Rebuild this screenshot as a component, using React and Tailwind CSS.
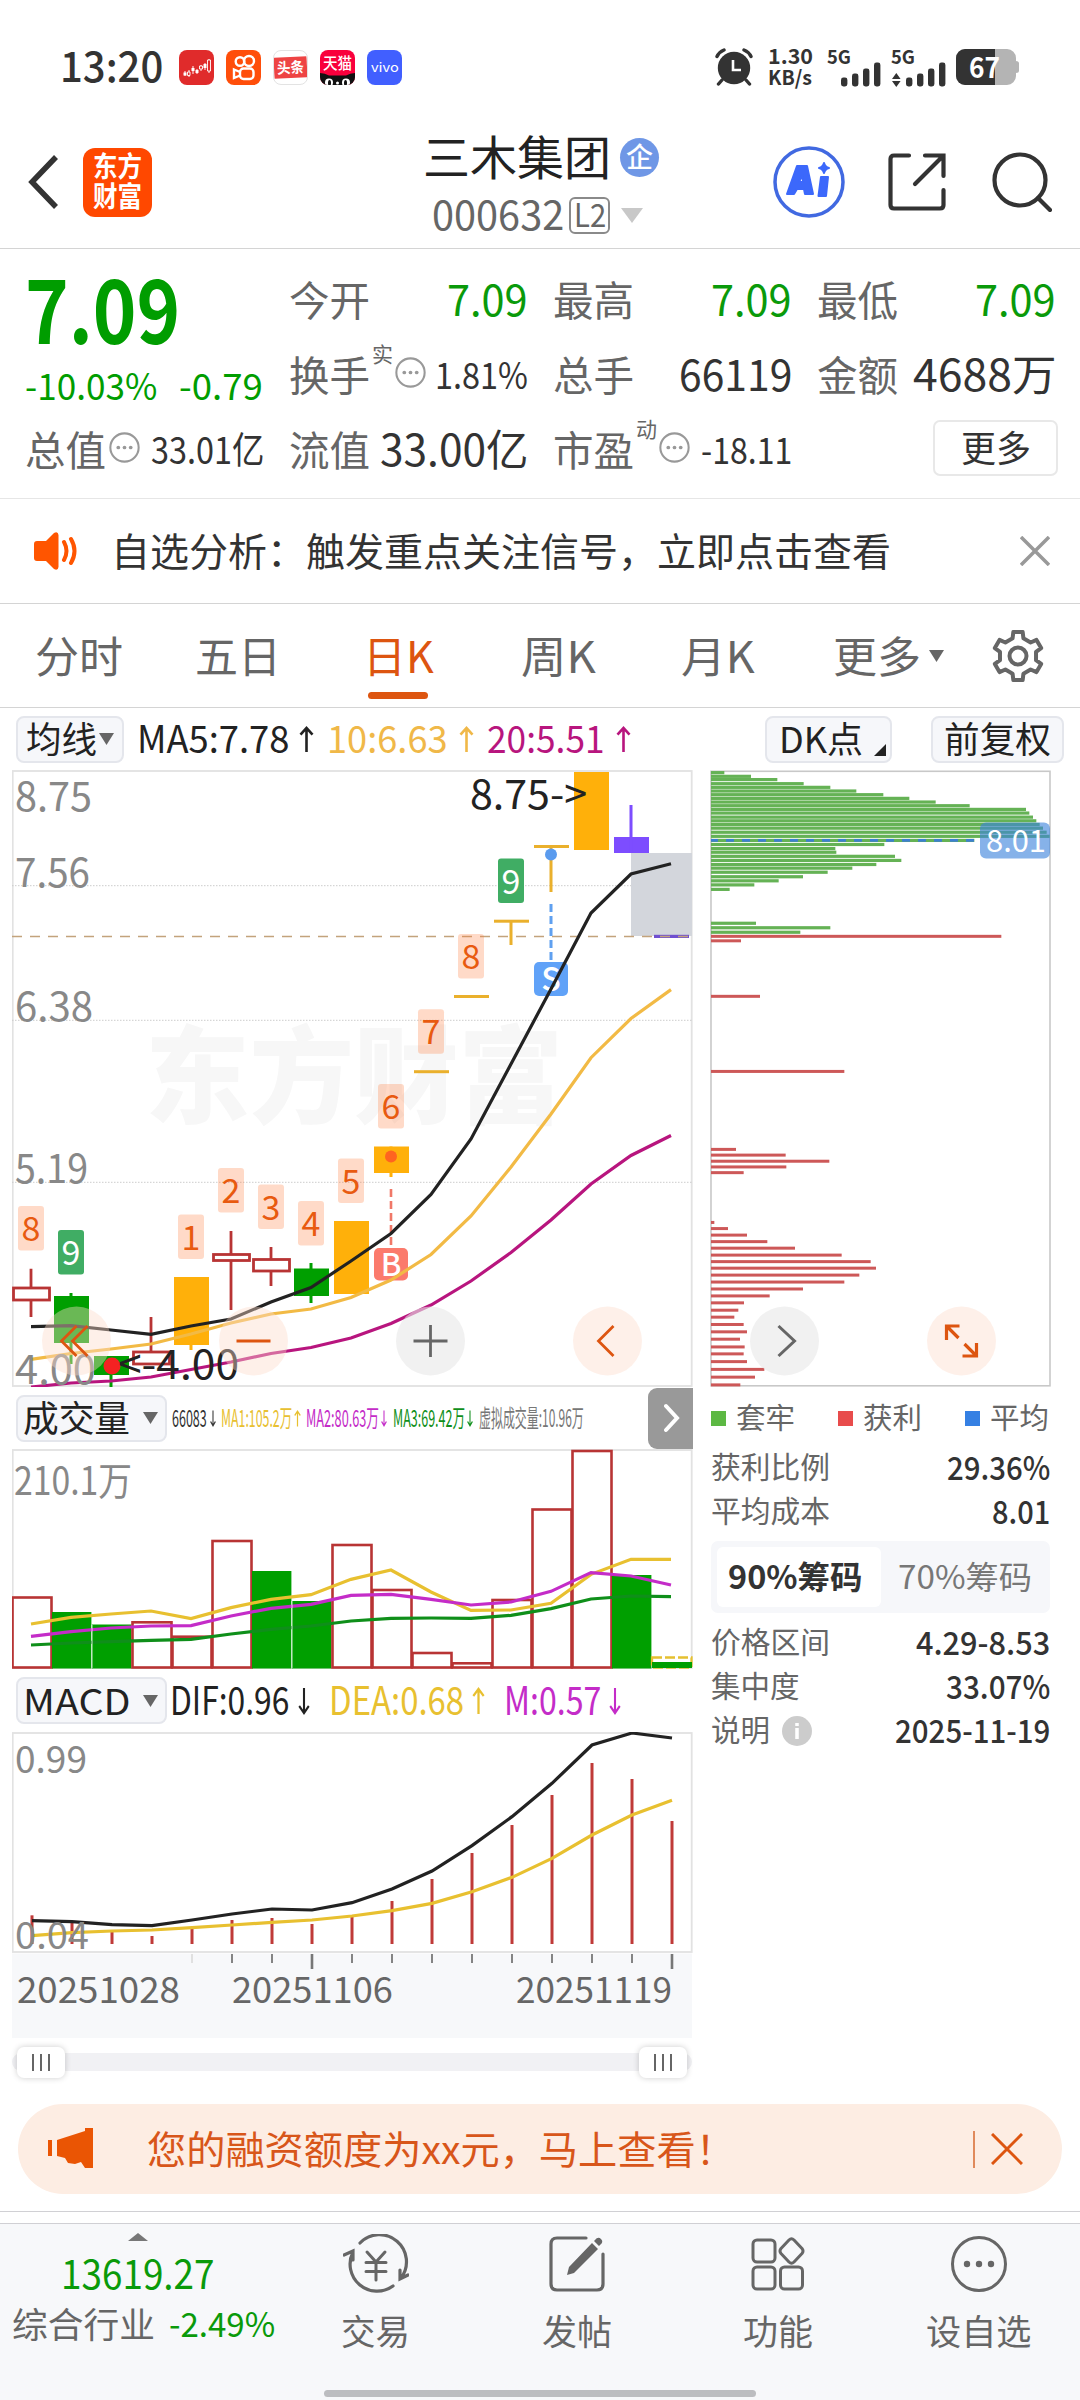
import React, { useLayoutEffect, useRef } from 'react';
import clsx from 'clsx';

const FONT = '"Noto Sans CJK SC", "Noto Sans", sans-serif';

// Text that is squeezed or stretched to a fixed column width
const Fit = ({ w, className, children }) => {
  const ref = useRef(null);

  useLayoutEffect(() => {
    const el = ref.current;
    el.style.transform = `scaleX(${w / el.offsetWidth})`;
  }, [w, children]);

  return (
    <span className={clsx('block shrink-0 leading-none', className)} style={{ width: w }}>
      <span ref={ref} className="inline-block whitespace-nowrap origin-left -translate-y-[0.06em]">
        {children}
      </span>
    </span>
  );
};

const Arrow = ({ down, className = 'w-[15px] h-[28px]' }) => (
  <svg viewBox="0 0 15 28" preserveAspectRatio="none" className={clsx('shrink-0', down && 'rotate-180', className)} fill="none" stroke="currentColor" strokeWidth="2.6">
    <path d="M7.5 27V2M1.5 9l6-7 6 7" />
  </svg>
);

const Caret = ({ className }) => (
  <svg viewBox="0 0 10 10" preserveAspectRatio="none" className={clsx('shrink-0', className)}>
    <path d="M0 0h10L5 10z" fill="currentColor" />
  </svg>
);

const Dots = ({ className }) => (
  <svg viewBox="0 0 30 30" className={clsx('w-[31px] h-[31px] shrink-0 text-[#999]', className)}>
    <circle cx="15" cy="15" r="13.7" fill="none" stroke="currentColor" strokeWidth="2" />
    {[9, 15, 21].map((x) => <circle key={x} cx={x} cy="15" r="1.8" fill="currentColor" />)}
  </svg>
);

// --- Status bar & header ---

const Signal = ({ data }) => (
  <svg viewBox="0 0 56 40" className="w-[56px] h-[40px] overflow-visible">
    <text x={data ? 0 : 1} y="17" fontSize="19" fontWeight="700" fill="#333" textLength="24" lengthAdjust="spacingAndGlyphs">5G</text>
    {[9, 13, 18, 24].map((h, i) => (
      <rect key={h} x={15 + i * 11} y={39.5 - h} width="6.4" height={h} rx="2.4" fill="#333" />
    ))}
    {data && <path d="M1 32l4.300-6 4.300 6zM1 34l4.300 6 4.300-6z" fill="#333" />}
  </svg>
);

const StatusBar = () => (
  <div className="h-[116px] pt-[18px] pl-[60px] flex items-center">
    <Fit w={103} className="text-[42px] font-medium text-[#333]">13:20</Fit>
    <div className="flex gap-[12px] ml-[16px]">
      <svg viewBox="0 0 35 35" className="w-[35px] h-[35px]">
        <rect width="35" height="35" rx="8" fill="#e02b2b" />
        <path d="M6 21v5M10 20v7M14 16v8M18 19v5M22 15v6M26 13v7M30 9v14" stroke="#fff" strokeWidth="1.200" opacity=".8" />
        <path d="M4.500 22.500h3v3h-3zM12.500 18h3v3h-3zM16.500 20h3v3h-3zM24.500 14h3v4h-3z" fill="#fff" />
        <path d="M8.500 22h2.500v3.500H8.500zM20.500 16h3v3h-3zM28.500 10h3v11h-3z" fill="#e02b2b" stroke="#fff" strokeWidth=".9" />
      </svg>
      <svg viewBox="0 0 35 35" className="w-[35px] h-[35px]">
        <rect width="35" height="35" rx="8" fill="#ff4e0a" />
        <g fill="none" stroke="#fff" strokeWidth="2.400">
          <circle cx="14" cy="11.500" r="4.300" />
          <circle cx="23" cy="11" r="5" />
          <rect x="14" y="18.500" width="13.500" height="10.500" rx="3.500" />
          <path d="M14 22l-6-2.500v8.500l6-2.500" />
        </g>
      </svg>
      <div className="w-[35px] h-[35px] rounded-[8px] border border-[#e3e3e3] bg-white flex items-center overflow-hidden">
        <div className="w-[35px] h-[21px] bg-[#ee4444] -rotate-3 flex items-center justify-center">
          <Fit w={27} className="text-[15px] font-bold text-white">头条</Fit>
        </div>
      </div>
      <div className="w-[35px] h-[35px] rounded-[8px] bg-[#f9003c] overflow-hidden flex flex-col justify-between items-center">
        <Fit w={29} className="text-[15.500px] font-medium text-white mt-[6px]">天猫</Fit>
        <svg viewBox="0 0 35 12" className="w-[35px] h-[12px]">
          <path d="M0 12V0q5 0 9 2.500h17Q30 0 35 0v12z" fill="#111" />
          <circle cx="9" cy="9.500" r="4" fill="#fff" />
          <circle cx="26" cy="9.500" r="4" fill="#fff" />
          <ellipse cx="9.500" cy="10" rx="1.500" ry="3" fill="#111" />
          <ellipse cx="25.500" cy="10" rx="1.500" ry="3" fill="#111" />
          <circle cx="17.500" cy="10" r="1.500" fill="#fff" />
        </svg>
      </div>
      <div className="w-[35px] h-[35px] rounded-[8px] bg-[#415fff] flex items-center justify-center">
        <Fit w={28} className="text-[13px] text-white">vivo</Fit>
      </div>
    </div>
    <svg viewBox="0 0 38 38" className="w-[38px] h-[38px] ml-[313px]">
      <circle cx="19" cy="20" r="16.200" fill="#333" />
      <path d="M2 8.500Q4 4 9 2M36 8.500Q34 4 29 2M7 32l-3.500 4M31 32l3.500 4" stroke="#333" strokeWidth="3.400" strokeLinecap="round" fill="none" />
      <path d="M18 12v10h8" stroke="#fff" strokeWidth="2.600" fill="none" />
    </svg>
    <div className="ml-[15px] flex flex-col gap-[1px]">
      <Fit w={45} className="text-[21px] font-bold text-[#333]">1.30</Fit>
      <Fit w={44} className="text-[20px] font-bold text-[#333]">KB/s</Fit>
    </div>
    <div className="ml-[13px] flex gap-[9px]">
      <Signal />
      <Signal data />
    </div>
    <svg viewBox="0 0 63 36" className="w-[63px] h-[36px] ml-[9px] overflow-visible">
      <path d="M9 0h42a9 9 0 0 1 9 9v3q3 0 3 2.500v7q0 2.500-3 2.500v3a9 9 0 0 1-9 9H9a9 9 0 0 1-9-9V9a9 9 0 0 1 9-9z" fill="#b4b4b4" />
      <path d="M9 0h30v36H9a9 9 0 0 1-9-9V9a9 9 0 0 1 9-9z" fill="#333" />
      <text x="13" y="28.500" fontSize="29" fontWeight="700" fill="#fff" textLength="31" lengthAdjust="spacingAndGlyphs">67</text>
    </svg>
  </div>
);

const Header = () => (
  <div className="h-[133px] pl-[28px] flex items-center border-b border-[#d4d4d4]">
    <svg viewBox="0 0 30 54" className="w-[30px] h-[54px]" fill="none" stroke="#333" strokeWidth="5.500">
      <path d="M28 2L4 27l24 25" />
    </svg>
    <div className="w-[69px] h-[69px] ml-[25px] rounded-[12px] bg-[#ff4800] text-white flex flex-col items-center justify-center gap-[2px]">
      <Fit w={49} className="text-[28px] font-bold">东方</Fit>
      <Fit w={49} className="text-[28px] font-bold">财富</Fit>
    </div>
    <div className="ml-[271px] w-[237px] pt-[5px]">
      <div className="flex items-center gap-[9px]">
        <Fit w={188} className="text-[47px] text-[#222]">三木集团</Fit>
        <div className="w-[39px] h-[39px] rounded-full bg-[#6f97e6] flex items-center justify-center">
          <Fit w={27} className="text-[27px] font-medium text-white">企</Fit>
        </div>
      </div>
      <div className="flex items-center mt-[14px] pl-[9px]">
        <Fit w={132} className="text-[40px] text-[#666]">000632</Fit>
        <div className="w-[41px] h-[37px] ml-[5px] rounded-[6px] border-2 border-[#8a8a8a] flex items-center justify-center">
          <Fit w={32} className="text-[32px] text-[#666]">L2</Fit>
        </div>
        <Caret className="w-[22px] h-[15px] ml-[11px] text-[#c8c8c8]" />
      </div>
    </div>
    <svg viewBox="0 0 72 72" className="w-[72px] h-[72px] ml-[113px]">
      <circle cx="36" cy="36" r="34" fill="none" stroke="#4169e1" strokeWidth="3.500" />
      <g fill="#3c68fb" stroke="#3c68fb" strokeWidth="2" strokeLinejoin="round">
        <path fillRule="evenodd" d="M24 20h10l6 28h-8l-1-5h-7l-3 5h-7zM26 36h4l-.5-7z" />
        <path d="M48 31h7l-2 19h-7.500zM51 17q1 4 5 5-4 1-5 5-1-4-5-5 4-1 5-5z" />
      </g>
    </svg>
    <svg viewBox="0 0 58 58" className="w-[58px] h-[58px] ml-[43px]" fill="none" stroke="#333" strokeWidth="4.200" strokeLinecap="round">
      <path d="M21 2.500H6Q2.500 2.500 2.500 6v46q0 3.500 3.500 3.500h46q3.500 0 3.500-3.500V37M37 2.500h18.500V23M55 3L27 31" />
    </svg>
    <svg viewBox="0 0 60 60" className="w-[60px] h-[60px] ml-[46px]" fill="none" stroke="#333" strokeWidth="4.200" strokeLinecap="round">
      <circle cx="28" cy="28" r="25.500" />
      <path d="M46 46l12 12" />
    </svg>
  </div>
);

// --- Quote ---

const Cell = ({ label, sup, dots, value, w, green, small }) => (
  <div className="flex items-center -ml-px -mr-[2px]">
    <Fit w={81} className="text-[41px] text-[#666]">{label}</Fit>
    {sup && <Fit w={21} className="text-[21px] text-[#666] mb-[42px] ml-[2px]">{sup}</Fit>}
    {dots && <Dots className={clsx('mb-[6px]', sup ? 'ml-[2px]' : 'ml-[3px]')} />}
    <Fit w={w} className={clsx('ml-auto', green ? 'text-[#0a9a0a]' : 'text-[#333]', small ? 'text-[37px]' : 'text-[43px]')}>
      {value}
    </Fit>
  </div>
);

const Quote = () => (
  <div className="h-[250px] px-[26px] pt-[14px] border-b border-[#e6e6e6] grid grid-cols-4 grid-rows-[75px_75px_75px] gap-x-[28px]">
    <div className="row-span-2 pt-[3px] text-[#009d00]">
      <Fit w={155} className="text-[89px] font-bold -ml-px">7.09</Fit>
      <div className="flex justify-between mt-[13px] -ml-px -mr-px">
        <Fit w={132} className="text-[37px]">-10.03%</Fit>
        <Fit w={84} className="text-[37px]">-0.79</Fit>
      </div>
    </div>
    <Cell label="今开" value="7.09" w={81} green />
    <Cell label="最高" value="7.09" w={81} green />
    <Cell label="最低" value="7.09" w={81} green />
    <Cell label="换手" sup="实" dots value="1.81%" w={93} small />
    <Cell label="总手" value="66119" w={113} />
    <Cell label="金额" value="4688万" w={143} />
    <Cell label="总值" dots value="33.01亿" w={113} small />
    <Cell label="流值" value="33.00亿" w={148} />
    <Cell label="市盈" sup="动" dots value="-18.11" w={91} small />
    <div className="flex items-center justify-end -mr-[4px]">
      <div className="w-[125px] h-[56px] -mt-[5px] rounded-[7px] border-2 border-[#e8e8e8] flex items-center justify-center">
        <Fit w={70} className="text-[36px] text-[#333]">更多</Fit>
      </div>
    </div>
  </div>
);

const Notice = () => (
  <div className="h-[105px] pl-[34px] pr-[30px] flex items-center border-b border-[#d4d4d4]">
    <svg viewBox="0 0 44 38" className="w-[44px] h-[38px]">
      <path d="M3 9h9L20 1q4-2 4.500 2v32q-.5 4-4.500 2l-8-8H3q-3 0-3-3V12q0-3 3-3z" fill="#ff5500" />
      <path d="M30 10q5 9 0 18M37 7q7 12 0 24" fill="none" stroke="#ff5500" strokeWidth="4" strokeLinecap="round" />
    </svg>
    <Fit w={780} className="ml-[33px] text-[39px] text-[#333]">自选分析：触发重点关注信号，立即点击查看</Fit>
    <svg viewBox="0 0 30 30" className="w-[30px] h-[30px] ml-auto" stroke="#999" strokeWidth="3.500">
      <path d="M1 1l28 28M29 1L1 29" />
    </svg>
  </div>
);

// --- Period tabs ---

const gearPoints = Array.from({ length: 6 }, (_, k) => {
  const base = -90 + k * 60;
  return [[-17, 18.5], [-11, 24.5], [11, 24.5], [17, 18.5]].map(([da, r]) => {
    const a = ((base + da) * Math.PI) / 180;
    return `${26 + r * Math.cos(a)},${26 + r * Math.sin(a)}`;
  }).join(' ');
}).join(' ');

const Tabs = () => (
  <div className="h-[104px] pt-[3px] pl-[35px] flex items-center border-b border-[#d4d4d4] text-[43px] text-[#666]">
    <Fit w={88}>分时</Fit>
    <Fit w={86} className="ml-[72px]">五日</Fit>
    <div className="ml-[82px] relative text-[#dd5510]">
      <Fit w={71}>日K</Fit>
      <div className="absolute left-[5px] top-[56px] w-[60px] h-[7px] rounded-full bg-[#dd5510]" />
    </div>
    <Fit w={75} className="ml-[87px]">周K</Fit>
    <Fit w={74} className="ml-[85px]">月K</Fit>
    <Fit w={88} className="ml-[78px]">更多</Fit>
    <Caret className="w-[15px] h-[12px] ml-[8px] -mt-[3px]" />
    <svg viewBox="0 0 52 52" className="w-[52px] h-[52px] ml-[48px] -mt-[3px]" fill="none" stroke="#666" strokeWidth="4">
      <polygon points={gearPoints} strokeLinejoin="round" />
      <circle cx="26" cy="26" r="8.500" />
    </svg>
  </div>
);

const Chip = ({ className, children }) => (
  <div className={clsx('h-[47px] shrink-0 rounded-[8px] border-2 border-[#e4e6ec] bg-[#f6f7fa] text-[36px] text-[#222] flex items-center', className)}>
    {children}
  </div>
);

const MaBar = () => (
  <div className="h-[62px] pl-[16px] pr-[16px] flex items-center text-[38px]">
    <Chip className="w-[108px] pl-[8px]">
      <Fit w={71}>均线</Fit>
      <Caret className="w-[15px] h-[12px] ml-[2px] text-[#666]" />
    </Chip>
    <div className="flex items-center ml-[13px] text-[#222]">
      <Fit w={152}>MA5:7.78</Fit>
      <Arrow className="w-[15px] h-[27px] ml-[10px]" />
    </div>
    <div className="flex items-center ml-[13px] text-[#f0b848]">
      <Fit w={121}>10:6.63</Fit>
      <Arrow className="w-[15px] h-[27px] ml-[11px]" />
    </div>
    <div className="flex items-center ml-[13px] text-[#b8157e]">
      <Fit w={118}>20:5.51</Fit>
      <Arrow className="w-[15px] h-[27px] ml-[11px]" />
    </div>
    <Chip className="w-[127px] ml-auto pl-[12px]">
      <Fit w={84}>DK点</Fit>
      <svg viewBox="0 0 12 12" className="w-[12px] h-[12px] ml-[11px] mt-[22px]"><path d="M12 0v12H0z" fill="#222" /></svg>
    </Chip>
    <Chip className="w-[133px] ml-[39px] justify-center">
      <Fit w={107}>前复权</Fit>
    </Chip>
  </div>
);

// --- Price chart ---

const X = (i) => 31 + 40 * i;
const line = (ys, dx = 0) => ys.map((y, i) => `${X(i) + dx},${y}`).join(' ');

const ma5 = [1326.7, 1325.7, 1330, 1334.3, 1326, 1319, 1302, 1287.5, 1261, 1233.5, 1194.5, 1139, 1064, 989, 913, 874, 863.7];
const ma10 = [1359.3, 1353.5, 1349, 1344, 1334, 1323, 1314, 1309, 1297.5, 1280, 1254.5, 1216, 1167, 1114, 1057.7, 1018.5, 989.6];
const ma20 = [1387, 1383, 1381, 1377, 1369.5, 1362, 1353.5, 1347.5, 1338, 1323.5, 1305, 1281, 1252.5, 1220, 1184, 1155.5, 1135.5];

// kind, index, open/close band, wick band
const candles = [
  ['up', 0, 1288, 1300, 1268.7, 1317],
  ['down', 1, 1296, 1343, 1293, 1364],
  ['down', 2, 1356, 1375, 1356, 1387],
  ['up', 3, 1352, 1364, 1317, 1364],
  ['limit', 4, 1277, 1345, 1277, 1350],
  ['up', 5, 1254.5, 1260.5, 1231, 1310],
  ['up', 6, 1259.5, 1271, 1247, 1286],
  ['down', 7, 1268.5, 1296, 1263, 1303],
  ['limit', 8, 1221, 1294, 1221, 1294],
  ['limit', 9, 1146.5, 1173, 1146.5, 1177],
  ['flat', 10, 1070.2, 1073.2, 1071, 1072],
  ['flat', 11, 995, 998, 996, 997],
  ['flat', 12, 919.7, 922.7, 921, 945],
  ['flat', 13, 845, 848, 846, 892],
  ['limit', 14, 772, 850, 772, 850],
  ['mark', 15, 837, 853, 805, 853],
];

const candleColor = { up: '#b83434', down: '#009f00', limit: '#ffb00a', flat: '#eab02c', mark: '#7d4dff' };

const Candle = ({ kind, i, top, bottom, high, low }) => {
  const color = candleColor[kind];
  if (kind === 'up') {
    return (
      <g fill="none" stroke={color} strokeWidth="2.800">
        <rect x={X(i) - 17.5} y={top} width="36" height={bottom - top} />
        <path d={`M${X(i)} ${high}V${top}M${X(i)} ${bottom}V${low}`} />
      </g>
    );
  }
  return (
    <g fill={color}>
      <rect x={X(i) - 17} y={top} width="35" height={bottom - top} />
      <rect x={X(i) - 1.5} y={high} width="3" height={low - high} />
    </g>
  );
};

const counts = [
  [0, 8, 1206], [1, 9, 1230], [4, 1, 1214.5], [5, 2, 1168], [6, 3, 1184.5], [7, 4, 1201], [8, 5, 1158.5],
  [9, 6, 1084], [10, 7, 1009.3], [11, 8, 934], [12, 9, 858.5],
];

const RoundButton = ({ cx, gray, d, width = 2.8 }) => (
  <g>
    <circle cx={cx} cy="1341" r="34.500" fill={gray ? '#e8e8e8' : '#fddccb'} opacity={gray ? 0.6 : 0.42} />
    <path d={d} transform={`translate(${cx} 1341)`} fill="none" stroke={gray ? '#666' : '#dd5510'} strokeWidth={width} />
  </g>
);

const PriceChart = () => (
  <svg viewBox="12 770 681 617" className="block w-[681px] h-[617px]">
    <text x="145" y="1115" fontSize="106" fontWeight="900" fill="#f7f7f7" textLength="418" lengthAdjust="spacingAndGlyphs">东方财富</text>
    <rect x="12.700" y="771" width="679" height="615" fill="none" stroke="#e2e2e2" strokeWidth="1.800" />
    {[885.7, 1020.3, 1182.3].map((y) => (
      <path key={y} d={`M12 ${y}H692`} stroke="#ccc" strokeWidth="1" strokeDasharray="1.500 1.500" />
    ))}
    <rect x="631" y="853" width="61" height="83" fill="#d3d6dc" />
    <g fontSize="41" fill="#888">
      <text x="15" y="811" textLength="77" lengthAdjust="spacingAndGlyphs">8.75</text>
      <text x="15" y="887" textLength="75" lengthAdjust="spacingAndGlyphs">7.56</text>
      <text x="15" y="1021" textLength="78" lengthAdjust="spacingAndGlyphs">6.38</text>
      <text x="15" y="1183" textLength="73" lengthAdjust="spacingAndGlyphs">5.19</text>
    </g>
    {candles.map(([kind, i, top, bottom, high, low]) => (
      <Candle key={i} kind={kind} i={i} top={top} bottom={bottom} high={high} low={low} />
    ))}
    <rect x="654" y="934.800" width="35" height="3.200" fill="#7050d0" />
    <path d="M12 936.500H692" stroke="#c3a37c" strokeWidth="1.300" strokeDasharray="10 8" />
    {counts.map(([i, n, y]) => (
      <g key={i}>
        <rect x={X(i) - 13} y={y} width="26" height="44.500" rx="3" fill={n === 9 ? '#40ad64' : '#ff7733'} opacity={n === 9 ? 1 : 0.27} />
        <text x={X(i)} y={y + 35} fontSize="34" textAnchor="middle" fill={n === 9 ? '#fff' : '#e85a10'}>{n}</text>
      </g>
    ))}
    <g>
      <circle cx="391" cy="1156.500" r="6" fill="#ff6420" />
      <path d="M391 1189v56" stroke="#f07868" strokeWidth="2.600" strokeDasharray="8 4" />
      <rect x="374" y="1248" width="34" height="32.500" rx="5" fill="#fb7a6c" />
      <text x="391" y="1276" fontSize="31" fontWeight="500" textAnchor="middle" fill="#fff">B</text>
      <circle cx="551" cy="854.500" r="6" fill="#5a9bee" />
      <path d="M551 904v58" stroke="#5fa0f0" strokeWidth="3" strokeDasharray="8 4" />
      <rect x="534" y="962" width="34" height="34" rx="5" fill="#60a2f8" />
      <text x="551" y="991" fontSize="32" fontWeight="500" textAnchor="middle" fill="#fff">S</text>
    </g>
    <g fill="none" strokeWidth="3.200">
      <polyline points={line(ma20)} stroke="#b8157e" />
      <polyline points={line(ma10)} stroke="#f2ba45" />
      <polyline points={line(ma5)} stroke="#222" />
    </g>
    <circle cx="112" cy="1366" r="8.500" fill="#f52222" />
    <text x="15" y="1384" fontSize="41" fill="#888" textLength="81" lengthAdjust="spacingAndGlyphs">4.00</text>
    <g fontSize="41" fill="#222">
      <text x="470" y="809" textLength="117" lengthAdjust="spacingAndGlyphs">8.75-&gt;</text>
      <text x="118" y="1379" textLength="121" lengthAdjust="spacingAndGlyphs">&lt;-4.00</text>
    </g>
    <RoundButton cx={76.5} d="M0-15L-15 0 0 15M11-15L-4 0 11 15" />
    <RoundButton cx={253.5} d="M-17 0H17" />
    <RoundButton cx={430.5} gray d="M-17 0H17M0-16V16" />
    <RoundButton cx={607.5} d="M6-15L-9 0 6 15" />
  </svg>
);

// --- Volume chart ---

const volumes = [
  [1597.5, 1], [1612, 0], [1624.5, 0], [1622.3, 1], [1636.7, 1], [1541, 1], [1571, 0], [1601, 0], [1545, 1],
  [1590, 1], [1653, 1], [1663.3, 1], [1600, 1], [1509.5, 1], [1451, 1], [1575, 0],
];
const vol1 = [732, 712, 702, 693, 716, 683, 658, 644, 598, 570, 636, 691, 690, 670, 583, 538, 538];
const vol2 = [769, 755, 744, 738, 737, 708, 685, 673, 646, 643, 658, 675, 666, 634, 578, 588, 615];
const vol3 = [795, 789, 785, 781, 778, 762, 748, 738, 723, 715, 714, 715, 706, 686, 657, 648, 650];
const volLine = (ys) => line(ys.map((y) => 1380 + y / 3));

const VolumeChart = () => (
  <svg viewBox="12 1449 681 220" className="block w-[681px] h-[220px]">
    <rect x="12.700" y="1450" width="679" height="218" fill="none" stroke="#e2e2e2" strokeWidth="1.800" />
    <text x="14" y="1495" fontSize="39" fill="#888" textLength="118" lengthAdjust="spacingAndGlyphs">210.1万</text>
    {volumes.map(([y, up], i) => up
      ? <rect key={i} x={12.5 + 40 * i} y={y} width="39" height={1667.5 - y} fill="none" stroke="#b83434" strokeWidth="2.600" />
      : <rect key={i} x={12 + 40 * i} y={y} width="39.400" height={1668.5 - y} fill="#009f00" />)}
    <rect x="652" y="1657.500" width="39.500" height="10" fill="none" stroke="#e5c030" strokeWidth="2.300" strokeDasharray="10 3" />
    <rect x="652" y="1662" width="40" height="6" fill="#009f00" />
    <g fill="none" strokeWidth="3.200">
      <polyline points={volLine(vol3)} stroke="#0f8f1a" />
      <polyline points={volLine(vol1)} stroke="#e8c030" />
      <polyline points={volLine(vol2)} stroke="#c42cc8" />
    </g>
    <path d="M92 1625v43M292 1601v67" stroke="#fff" strokeWidth=".8" />
  </svg>
);

const VolumeBar = () => (
  <div className="h-[62px] pl-[4px] flex items-center text-[24px]">
    <Chip className="w-[151px] pl-[5px]">
      <Fit w={107}>成交量</Fit>
      <Caret className="w-[15px] h-[12px] ml-[13px] text-[#666]" />
    </Chip>
    <div className="flex items-center ml-[5px] text-[#333]">
      <Fit w={35}>66083</Fit>
      <Arrow down className="w-[6px] h-[17px] ml-[3px]" />
    </div>
    <div className="flex items-center ml-[5px] text-[#e8c030]">
      <Fit w={71}>MA1:105.2万</Fit>
      <Arrow className="w-[7px] h-[17px] ml-[2px]" />
    </div>
    <div className="flex items-center ml-[5px] text-[#c42cc8]">
      <Fit w={73}>MA2:80.63万</Fit>
      <Arrow down className="w-[6px] h-[17px] ml-[2px]" />
    </div>
    <div className="flex items-center ml-[6px] text-[#0f8f1a]">
      <Fit w={72}>MA3:69.42万</Fit>
      <Arrow down className="w-[6px] h-[17px] ml-[2px]" />
    </div>
    <Fit w={105} className="ml-[6px] text-[#777]">虚拟成交量:10.96万</Fit>
    <div className="w-[45px] h-[61px] ml-auto rounded-l-[9px] bg-[#999] flex items-center justify-center">
      <svg viewBox="0 0 16 30" className="w-[16px] h-[30px] ml-[3px]" fill="none" stroke="#fff" strokeWidth="4" strokeLinecap="round">
        <path d="M2 3l11 12L2 27" />
      </svg>
    </div>
  </div>
);

// --- MACD ---

const macdBars = [736, 753, 786, 798, 774, 750, 744, 762, 741, 693, 627, 549, 465, 375, 279, 327, 453];
const dif = [752, 755, 764, 767, 750, 732, 717, 720, 698, 657, 603, 527, 440, 340, 225, 189, 204];
const dea = [797, 788, 783, 780, 773, 765, 757, 750, 738, 722, 700, 665, 622, 565, 495, 435, 391];
const macdLine = (ys) => line(ys.map((y) => 1670 + y / 3), 1);

const MacdBar = () => (
  <div className="h-[63px] pl-[4px] flex items-center text-[39px]">
    <Chip className="w-[151px] pl-[5px]">
      <Fit w={107}>MACD</Fit>
      <Caret className="w-[15px] h-[12px] ml-[13px] text-[#666]" />
    </Chip>
    <Fit w={119} className="ml-[3px] text-[#222]">DIF:0.96</Fit>
    <Arrow down className="w-[12px] h-[28px] ml-[9px] text-[#222]" />
    <Fit w={135} className="ml-[19px] text-[#e8c030]">DEA:0.68</Fit>
    <Arrow className="w-[13px] h-[28px] ml-[8px] text-[#e8c030]" />
    <Fit w={97} className="ml-[19px] text-[#c42cc8]">M:0.57</Fit>
    <Arrow down className="w-[12px] h-[28px] ml-[8px] text-[#c42cc8]" />
  </div>
);

const MacdChart = () => (
  <svg viewBox="12 1732 681 306" className="block w-[681px] h-[306px]">
    <rect x="12" y="1953.500" width="680" height="84.500" fill="#f7f8fa" />
    <rect x="12.700" y="1733" width="679" height="219" fill="none" stroke="#e2e2e2" strokeWidth="1.800" />
    {macdBars.map((y, i) => (
      <rect key={i} x={X(i) - 0.5} y={1670 + y / 3} width="3" height={274 - y / 3} fill="#c03a38" />
    ))}
    <g fill="none" strokeWidth="3.200">
      <polyline points={macdLine(dif)} stroke="#222" />
      <polyline points={macdLine(dea)} stroke="#e8c030" />
    </g>
    <g fontSize="38" fill="#888">
      <text x="15" y="1773" textLength="72" lengthAdjust="spacingAndGlyphs">0.99</text>
      <text x="15" y="1949" textLength="74" lengthAdjust="spacingAndGlyphs">0.04</text>
    </g>
    {macdBars.map((_, i) => i > 3 && (
      <path key={i} d={`M${X(i) + 1} 1954v${i === 7 || i === 16 ? 15 : 9}`} stroke={i === 4 ? '#ddd' : '#777'} strokeWidth={i === 7 || i === 16 ? 2.6 : 1.8} />
    ))}
    <g fontSize="36" fill="#666">
      <text x="17" y="2003" textLength="163" lengthAdjust="spacingAndGlyphs">20251028</text>
      <text x="232" y="2003" textLength="161" lengthAdjust="spacingAndGlyphs">20251106</text>
      <text x="516" y="2003" textLength="156" lengthAdjust="spacingAndGlyphs">20251119</text>
    </g>
  </svg>
);

const Handle = () => (
  <div className="w-[48px] h-[31px] rounded-[7px] bg-white shadow-[0_0_6px_rgba(0,0,0,0.2)] flex items-center justify-center gap-[6px]">
    {[0, 1, 2].map((n) => <div key={n} className="w-[2px] h-[17px] bg-[#666]" />)}
  </div>
);

const RangeSlider = () => (
  <div className="h-[48px] flex items-center">
    <div className="w-[680px] h-[18px] rounded-full bg-[#f1f1f4] flex items-center justify-between px-[5px]">
      <Handle />
      <Handle />
    </div>
  </div>
);

// --- Chip distribution ---

const trapped = [
  [31, 40], [40, 120], [48, 199], [58, 278], [67, 358], [76, 436], [85, 517], [94, 595], [103, 674], [112, 776],
  [121, 945], [130, 955], [140, 966], [149, 976], [158, 986], [167, 996], [177, 1007], [187, 1016], [197, 790], [207, 520], [217, 373],
  [226, 376], [236, 552], [246, 571], [256, 496], [265, 424], [275, 350], [286, 276], [296, 203], [306, 130], [317, 56],
  [400, 135], [411, 358], [422, 268],
];
const profit = [
  [432, 871], [443, 90], [579, 147], [763, 400], [954, 75], [968, 224], [983, 355], [997, 226], [1011, 98],
  [1133, 10], [1148, 51], [1164, 108], [1180, 169], [1196, 252], [1213, 392], [1229, 479], [1245, 495], [1262, 445],
  [1279, 400], [1296, 276], [1313, 176], [1330, 99], [1348, 82], [1365, 70], [1383, 98], [1401, 108], [1419, 87],
  [1438, 101], [1455, 98], [1474, 108], [1493, 160], [1512, 132], [1531, 88],
];

const ChipChart = () => (
  <svg viewBox="710 770 341 617" className="block w-[341px] h-[617px]">
    <rect x="711" y="771.300" width="339" height="614.500" fill="none" stroke="#c8c8c8" strokeWidth="1.600" />
    {trapped.map(([y, w]) => <rect key={y} x="711" y={760 + y / 2.45 - 1.6} width={w / 3} height="3.200" fill="#65b255" />)}
    {profit.map(([y, w]) => <rect key={y} x="711" y={760 + y / 2.45 - 1.5} width={w / 3} height="3" fill="#cd5858" />)}
    <path d="M711 840.400H974" stroke="#3c7fd0" strokeWidth="2.800" strokeDasharray="8 8" strokeDashoffset="1" />
    <rect x="980" y="822.500" width="70" height="36" rx="6" fill="#3c82dc" opacity=".62" />
    <text x="986" y="851.500" fontSize="31" fill="#fff" textLength="60" lengthAdjust="spacingAndGlyphs">8.01</text>
    <RoundButton cx={784.5} gray d="M-6-15L10 0-6 15" width={3} />
    <RoundButton cx={961.5} width={3.2} d="M-15-1V-15H-2M-15-15L-3-3M15 2V15H1M15 15L3 3" />
  </svg>
);

const StatRow = ({ label, lw, value, w, info }) => (
  <div className="h-[44px] pl-px flex items-center">
    <Fit w={lw} className="text-[29.500px] text-[#666]">{label}</Fit>
    {info && (
      <svg viewBox="0 0 30 30" className="w-[30px] h-[30px] ml-[12px]">
        <circle cx="15" cy="15" r="15" fill="#ccc" />
        <path d="M15 12v11M15 7v3" stroke="#fff" strokeWidth="3.500" />
      </svg>
    )}
    <Fit w={w} className="ml-auto text-[32.500px] font-medium text-[#333] mr-px">{value}</Fit>
  </div>
);

const legend = [
  ['套牢', 'bg-[#5cb843]'],
  ['获利', 'bg-[#e84c4c]'],
  ['平均', 'bg-[#3580e3]'],
];

const ChipPanel = () => (
  <div className="w-[341px]">
    <ChipChart />
    <div className="h-[59px] pt-[4px] flex items-center justify-between pl-px pr-[2px]">
      {legend.map(([name, color]) => (
        <div key={name} className="flex items-center gap-[10px]">
          <div className={clsx('w-[15px] h-[15px]', color)} />
          <Fit w={59} className="text-[29px] text-[#666]">{name}</Fit>
        </div>
      ))}
    </div>
    <StatRow label="获利比例" lw={119} value="29.36%" w={103} />
    <StatRow label="平均成本" lw={119} value="8.01" w={58} />
    <div className="h-[72px] mt-[7px] mb-[8px] mx-px rounded-[7px] bg-[#f6f7fa] flex items-center p-[6px] text-[32px]">
      <div className="w-[164px] h-[60px] rounded-[6px] bg-white flex items-center pl-[11px]">
        <Fit w={135} className="font-bold text-[#333]">90%筹码</Fit>
      </div>
      <Fit w={134} className="ml-[17px] text-[#777]">70%筹码</Fit>
    </div>
    <StatRow label="价格区间" lw={119} value="4.29-8.53" w={134} />
    <StatRow label="集中度" lw={89} value="33.07%" w={104} />
    <StatRow label="说明" lw={59} value="2025-11-19" w={155} info />
  </div>
);

// --- Bottom ---

const Banner = () => (
  <div className="mx-[18px] mt-[18px] h-[90px] rounded-full bg-[#fdede3] flex items-center pl-[30px] pr-[39px]">
    <svg viewBox="0 0 45 40" className="w-[45px] h-[40px] -mt-[2px]" fill="#ea5504">
      <path d="M0 12h4v16H0zM9 12l28-9V0h8v40h-8l-4-6-6 2-7-1-3-5-8-2z" />
    </svg>
    <Fit w={588} className="ml-[54px] text-[39px] text-[#d8561a]">您的融资额度为xx元，马上查看！</Fit>
    <div className="w-[2px] h-[37px] ml-auto bg-[#e08a5c]" />
    <svg viewBox="0 0 32 32" className="w-[32px] h-[32px] ml-[16px]" stroke="#dd5510" strokeWidth="3">
      <path d="M1 1l30 30M31 1L1 31" />
    </svg>
  </div>
);

const TradeIcon = () => (
  <svg viewBox="0 0 66 60" className="w-[66px] h-[60px]" fill="none" stroke="#666" strokeWidth="3.200" strokeLinecap="round">
    <path d="M17 9A27 27 0 0 1 58 44M50 52A27 27 0 0 1 10 18M1 21l9-4v9M65 41l-8 4v-9" />
    <path d="M24 18l9 10 9-10M33 28v18M23 28.500h20M23 37.500h20" strokeWidth="3" />
  </svg>
);

const PostIcon = () => (
  <svg viewBox="0 0 58 58" className="w-[58px] h-[58px]" fill="none" stroke="#666" strokeWidth="3.200" strokeLinecap="round">
    <path d="M38 3H9Q3 3 3 9v40q0 6 6 6h40q6 0 6-6V19" />
    <path d="M44 8l6 6-24 24-7 2 2-8zM47 5q3-4 6-1t-1 6l-1 1-5-5z" fill="#666" stroke="none" />
  </svg>
);

const FeatureIcon = () => (
  <svg viewBox="0 0 54 54" className="w-[54px] h-[54px]" fill="none" stroke="#666" strokeWidth="3" strokeLinejoin="round">
    <rect x="2" y="3" width="22" height="22" rx="4" />
    <rect x="2" y="30" width="22" height="22" rx="4" />
    <rect x="29.500" y="30" width="22" height="22" rx="4" />
    <path d="M38 3q2.500-2.500 5 0l8 8.500q2 2.500 0 5l-8 8.500q-2.500 2.500-5 0l-8-8.500q-2-2.500 0-5z" />
  </svg>
);

const MoreIcon = () => (
  <svg viewBox="0 0 58 58" className="w-[58px] h-[58px]">
    <circle cx="29" cy="29" r="26.500" fill="none" stroke="#666" strokeWidth="3" />
    {[17, 29, 41].map((x) => <circle key={x} cx={x} cy="29" r="3.200" fill="#666" />)}
  </svg>
);

const navItems = [
  ['交易', 69, TradeIcon],
  ['发帖', 70, PostIcon],
  ['功能', 70, FeatureIcon],
  ['设自选', 106, MoreIcon],
];

const BottomNav = () => (
  <div className="h-[177px] border-t border-[#d0d0d4] bg-[#f7f8fa] flex">
    <div className="w-[275px] pt-[9px] pl-[12px] flex flex-col">
      <svg viewBox="0 0 20 8" className="w-[20px] h-[8px] ml-[116px]"><path d="M10 0l10 8H0z" fill="#777" /></svg>
      <Fit w={154} className="mt-[13px] ml-[49px] text-[40px] text-[#0a9a0a]">13619.27</Fit>
      <div className="flex items-center mt-[13px]">
        <Fit w={143} className="text-[35.500px] text-[#666]">综合行业</Fit>
        <Fit w={106} className="ml-[14px] text-[34px] text-[#0a9a0a]">-2.49%</Fit>
      </div>
    </div>
    {navItems.map(([label, w, Icon]) => (
      <div key={label} className="w-[201.300px] flex flex-col items-center">
        <div className="h-[80px] flex items-center"><Icon /></div>
        <Fit w={w} className="mt-[10px] text-[35.500px] text-[#666]">{label}</Fit>
      </div>
    ))}
  </div>
);

export default function App() {
  return (
    <div className="w-[1080px] h-[2400px] bg-white overflow-hidden relative" style={{ fontFamily: FONT }}>
      <StatusBar />
      <Header />
      <Quote />
      <Notice />
      <Tabs />
      <MaBar />
      <div className="flex pl-[12px] gap-[17px]">
        <div className="w-[681px]">
          <PriceChart />
          <VolumeBar />
          <VolumeChart />
          <MacdBar />
          <MacdChart />
          <RangeSlider />
        </div>
        <ChipPanel />
      </div>
      <Banner />
      <div className="mt-[17px] h-[12px] border-t border-[#d0d0d4]" />
      <BottomNav />
      <div className="absolute left-[324px] bottom-[3px] w-[432px] h-[7px] rounded-full bg-[#bcbdc0]" />
    </div>
  );
}
